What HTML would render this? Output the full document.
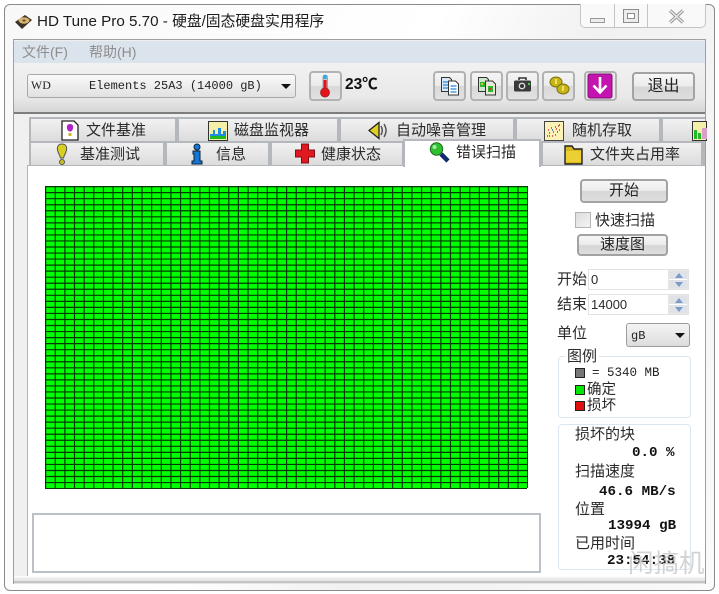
<!DOCTYPE html>
<html lang="zh"><head><meta charset="utf-8">
<style>
html,body{margin:0;padding:0;width:719px;height:594px;overflow:hidden;background:#fff}
body{position:relative;font-family:"Liberation Sans","Noto Sans CJK SC",sans-serif;color:#222}
.a{position:absolute;box-sizing:border-box}
.t{position:absolute;white-space:nowrap;font-size:15px;line-height:18px;color:#2a2a2a}
.m{position:absolute;white-space:nowrap;font-family:"Liberation Mono","Noto Sans CJK SC",monospace;font-size:13px;line-height:14px;color:#222}
.b{font-weight:bold;color:#111}
.btn{position:absolute;box-sizing:border-box;border:2px solid #a3a3a3;border-radius:4px;background:linear-gradient(#f6f6f6 0%,#ececec 48%,#d6d6d6 52%,#dedede 100%);text-align:center;font-size:15px;color:#222}
.tool{position:absolute;box-sizing:border-box;width:33px;height:30px;top:71px;border:2px solid #b2b2b2;border-radius:4px;background:linear-gradient(#f4f4f4 0%,#ebebeb 48%,#d8d8d8 52%,#e2e2e2 100%)}
.tab{position:absolute;box-sizing:border-box;height:24px;border:2px solid #b4b8bc;border-bottom:0;background:linear-gradient(#f1f1f1,#dcdcdc);font-size:15px;line-height:23px;color:#2a2a2a;white-space:nowrap}
.tab span{position:absolute;top:0}
.tab svg{position:absolute}
.spin{position:absolute;left:666px;width:23px;box-sizing:border-box;background:#dfe3e8;border:1px solid #e6e6e6}
</style></head><body>
<!-- window frame -->
<div class="a" style="left:4px;top:4px;width:711px;height:587px;border:1px solid #8a8a8a;border-radius:6px;background:linear-gradient(115deg,#f8f8f8 0%,#fff 45%,#f1f1f1 62%,#fafafa 100%)"></div>
<!-- hd icon -->
<svg class="a" style="left:14px;top:13px" width="19" height="18" viewBox="0 0 19 18"><path d="M1 9 L11 2 L18 7 L8 16 Z" fill="#3b3225"/><ellipse cx="10" cy="7.500" rx="5.500" ry="3.200" fill="#d7b471"/><ellipse cx="10" cy="7.500" rx="1.600" ry="1" fill="#5b4a2c"/></svg>
<div class="t" style="left:37px;top:13px;font-size:15.200px;color:#1c1c1c">HD Tune Pro 5.70 - <span style="font-size:14.800px">硬盘/固态硬盘实用程序</span></div>
<!-- caption buttons -->
<div class="a" style="left:580px;top:4px;width:126px;height:24px;border:1px solid #c4c4c4;border-top:0;border-radius:0 0 5px 5px;background:#f9f9f9"></div>
<div class="a" style="left:614px;top:4px;width:1px;height:23px;background:#c4c4c4"></div>
<div class="a" style="left:647px;top:4px;width:1px;height:23px;background:#c4c4c4"></div>
<div class="a" style="left:590px;top:18px;width:15px;height:5px;border:1px solid #9a9a9a;background:#ececec"></div>
<div class="a" style="left:623px;top:9px;width:16px;height:14px;border:1px solid #8c8c8c;background:#ececec"><div class="a" style="left:3px;top:3px;width:8px;height:6px;border:1px solid #8c8c8c;background:#fff"></div></div>
<svg class="a" style="left:668px;top:9px" width="17" height="15" viewBox="0 0 17 15"><path d="M2 1.500 L15 13.500 M15 1.500 L2 13.500" stroke="#9a9a9a" stroke-width="3.400" fill="none"/><path d="M2 1.500 L15 13.500 M15 1.500 L2 13.500" stroke="#eee" stroke-width="1.200" fill="none"/></svg>
<!-- client -->
<div class="a" style="left:13px;top:39px;width:693px;height:545px;border:1px solid #9ca0a4;background:#efefef"></div>
<div class="a" style="left:14px;top:41px;width:691px;height:22px;background:#dbe3ec"></div>
<div class="t" style="left:22px;top:43px;font-size:14px;color:#8d8d8d">文件(F)</div>
<div class="t" style="left:89px;top:43px;font-size:14px;color:#8d8d8d">帮助(H)</div>
<div class="a" style="left:14px;top:63px;width:691px;height:49px;background:linear-gradient(#f1f1f1,#e9e9e9 70%,#d6d6d6)"></div>
<div class="a" style="left:14px;top:112px;width:691px;height:2px;background:#7d7d7d"></div>
<!-- drive select -->
<div class="a" style="left:27px;top:74px;width:269px;height:24px;border:1px solid #a8a8a8;border-radius:3px;background:linear-gradient(#fafafa,#ededed 50%,#e2e2e2)"></div>
<div class="m" style="left:31px;top:79px;font-size:11.700px;font-family:'Liberation Serif',serif;letter-spacing:.3px">WD</div>
<div class="m" style="left:89px;top:79px;font-size:12px">Elements 25A3 (14000 gB)</div>
<div class="a" style="left:281px;top:84px;border:4px solid transparent;border-top:5px solid #111;border-left-width:5px;border-right-width:5px"></div>
<!-- temp -->
<div class="tool" style="left:309px;top:71px;"></div>
<svg class="a" style="left:317px;top:73px" width="16" height="26" viewBox="0 0 16 26"><rect x="6" y="2" width="4.400" height="15" rx="2" fill="#c8c8c8" stroke="#777" stroke-width=".6"/><rect x="6.600" y="2" width="3" height="4" fill="#28a9e8"/><rect x="6.600" y="7" width="3" height="11" fill="#e2141e"/><circle cx="8" cy="19.500" r="4.600" fill="#e2141e" stroke="#8a2020" stroke-width=".6"/></svg>
<div class="m b" style="left:345px;top:78px;font-size:15.500px;font-family:'Liberation Sans','Noto Sans CJK SC',sans-serif">23℃</div>
<!-- tool buttons -->
<div class="tool" style="left:433px"></div><div class="tool" style="left:470px"></div><div class="tool" style="left:506px"></div><div class="tool" style="left:542px"></div><div class="tool" style="left:584px;top:71px;background:#e8e8e8"></div>
<svg class="a" style="left:440px;top:76px" width="20" height="20" viewBox="0 0 20 20"><path d="M1.500 1.500h8l2 2v12h-10z" fill="#dbe8f5" stroke="#333"/><path d="M8.500 5h7l3 3v11h-10z" fill="#fff" stroke="#333"/><path d="M3 6h5M3 9h5M3 12h5M10.500 10h6M10.500 13h6M10.500 16h6" stroke="#2a86d8" stroke-width="1.300"/></svg>
<svg class="a" style="left:477px;top:76px" width="20" height="20" viewBox="0 0 20 20"><path d="M1.500 1.500h8l2 2v12h-10z" fill="#cde6d0" stroke="#333"/><path d="M8.500 5h7l3 3v11h-10z" fill="#e9e9d8" stroke="#333"/><rect x="3" y="6" width="5" height="5" fill="#2fb82f"/><rect x="11" y="10" width="5" height="6" fill="#2fb82f"/><rect x="4" y="7" width="2" height="2" fill="#e6c020"/><rect x="12" y="12" width="2" height="2" fill="#d03030"/></svg>
<svg class="a" style="left:513px;top:77px" width="19" height="17" viewBox="0 0 19 17"><path d="M6 3V1h7v2" fill="none" stroke="#333" stroke-width="1.600"/><rect x="1" y="3.500" width="17" height="11" rx="1.500" fill="#3a3a3a"/><circle cx="9" cy="9" r="3.400" fill="#ddd"/><circle cx="9" cy="9" r="2" fill="#333"/><rect x="15" y="6" width="2" height="2" fill="#3dd13d"/></svg>
<svg class="a" style="left:548px;top:75px" width="22" height="21" viewBox="0 0 22 21"><ellipse cx="8" cy="7" rx="6" ry="5" fill="#c8b414" stroke="#7c7210"/><ellipse cx="15" cy="14" rx="6" ry="5" fill="#c8b414" stroke="#7c7210"/><rect x="7" y="4" width="2" height="5" fill="#eee36a"/><rect x="14" y="11" width="2" height="5" fill="#eee36a"/></svg>
<svg class="a" style="left:587px;top:73px" width="26" height="26" viewBox="0 0 26 26"><rect x="1" y="1" width="24" height="24" rx="2" fill="#c414b0" stroke="#7d0f74"/><path d="M13 4v15M6.500 12.500l6.500 7 6.500-7" fill="none" stroke="#fff" stroke-width="2.600"/></svg>
<div class="btn" style="left:632px;top:72px;width:63px;height:29px;line-height:25px;font-size:16px">退出</div>
<!-- left strip and panel -->
<div class="a" style="left:14px;top:114px;width:691px;height:469px;background:#f0f0f0"></div>
<div class="a" style="left:27px;top:165px;width:678px;height:418px;background:#fff;border-left:1px solid #b0b4b8;border-top:1px solid #b4b8bc"></div>
<div class="a" style="left:14px;top:576px;width:691px;height:8px;background:linear-gradient(#fff,#e8e8e8 40%,#e4e4e4)"></div>
<div class="a" style="left:14px;top:581px;width:691px;height:2px;background:#c4c4c4"></div>
<!-- tabs row1 -->
<div class="tab" style="left:29px;top:117px;width:148px"><span style="left:55px">文件基准</span>
<svg style="left:29px;top:1px" width="20" height="21" viewBox="0 0 20 21"><path d="M2 1h12l4 4v15H2z" fill="#fff" stroke="#222" stroke-width="1.300"/><path d="M10 4c3 0 3.400 2.500 3 4.500-.5 2-1.500 3-3 3s-2.500-1-3-3c-.4-2 0-4.500 3-4.500z" fill="#b022c8"/><rect x="8.500" y="13" width="3" height="3" fill="#c8bb20"/></svg></div>
<div class="tab" style="left:177px;top:117px;width:162px"><span style="left:55px">磁盘监视器</span>
<svg style="left:29px;top:2px" width="20" height="20" viewBox="0 0 20 20"><rect x=".5" y=".5" width="19" height="19" fill="#f5f0a8" stroke="#333"/><path d="M2 18v-5h3v-4h2v4h3V7h3v6h2v-3h3v8z" fill="#1f8ce0"/><path d="M2 18v-3h16v3z" fill="#22b822"/></svg></div>
<div class="tab" style="left:339px;top:117px;width:176px"><span style="left:55px">自动噪音管理</span>
<svg style="left:27px;top:2px" width="22" height="19" viewBox="0 0 22 19"><path d="M1 9.500 11 1.500v16z" fill="#e0d020" stroke="#222" stroke-width="1.300"/><path d="M13 5q2.500 4.500 0 9M16 3q4 6.500 0 13" stroke="#555" fill="none" stroke-width="1.500"/></svg></div>
<div class="tab" style="left:515px;top:117px;width:146px"><span style="left:55px">随机存取</span>
<svg style="left:27px;top:2px" width="20" height="20" viewBox="0 0 20 20"><rect x=".5" y=".5" width="19" height="19" fill="#fbf2b8" stroke="#444"/><path d="M3 15h1M5 12h1M4 9h1M8 15h1M9 11h1M12 8h1M14 5h1M15 9h1M11 14h1M7 7h1" stroke="#d83030" stroke-width="1.500"/><path d="M5 15h1M8 9h1M13 11h1M15 4h1M11 6h1" stroke="#3060d0" stroke-width="1.500"/></svg></div>
<div class="tab" style="left:661px;top:117px;width:44px;border-right:0">
<svg style="left:29px;top:2px" width="15" height="20" viewBox="0 0 15 20"><rect x=".5" y=".5" width="14" height="19" fill="#f5f0a8" stroke="#333"/><path d="M2 18V9h3v9zM6 18v-6h3v6z" fill="#22b822"/><rect x="10" y="7" width="5" height="11" fill="#d8a0c8"/></svg></div>
<!-- tabs row2 -->
<div class="tab" style="left:29px;top:141px;width:136px"><span style="left:49px">基准测试</span>
<svg style="left:22px;top:0" width="18" height="23" viewBox="0 0 18 23"><path d="M9 1c4 0 5 3 4.500 6-.4 3-2.500 5-3 8h-3c-.5-3-2.600-5-3-8C4 4 5 1 9 1z" fill="#d8d020" stroke="#555"/><circle cx="9" cy="19" r="2.500" fill="#c8c020" stroke="#555"/></svg></div>
<div class="tab" style="left:165px;top:141px;width:105px"><span style="left:49px">信息</span>
<svg style="left:23px;top:0" width="14" height="22" viewBox="0 0 14 22"><circle cx="7" cy="4" r="3" fill="#1478d8" stroke="#123"/><path d="M3 8h7v10h2v3H2v-3h2v-7H3z" fill="#1478d8" stroke="#123"/></svg></div>
<div class="tab" style="left:270px;top:141px;width:134px"><span style="left:49px">健康状态</span>
<svg style="left:22px;top:0" width="22" height="21" viewBox="0 0 22 21"><path d="M7.500 1h7v6h6v7h-6v6h-7v-6h-6V7h6z" fill="#e01820" stroke="#801010"/></svg></div>
<div class="tab" style="left:541px;top:141px;width:162px"><span style="left:47px">文件夹占用率</span>
<svg style="left:20px;top:1px" width="21" height="21" viewBox="0 0 21 21"><path d="M2 5V2h7l2 3h8v15H2z" fill="#d8b820" stroke="#222" stroke-width="1.400"/><path d="M3 7h15v11H3z" fill="#eccf34"/></svg></div>
<div class="tab" style="left:703px;top:141px;width:2px;border-right:0"></div>
<div class="tab" style="left:403px;top:139px;width:138px;height:28px;background:#fff;z-index:2"><span style="left:51px;top:0">错误扫描</span>
<svg style="left:23px;top:0" width="22" height="22" viewBox="0 0 22 22"><path d="M13 13 20 20" stroke="#102a70" stroke-width="4.500"/><circle cx="8.500" cy="8" r="6.200" fill="#2fc02f" stroke="#1e6a1e"/><circle cx="6.500" cy="6" r="2" fill="#a8eca8"/></svg></div>
<!-- grid -->
<svg class="a" style="left:45px;top:186px" width="483" height="303" viewBox="0 0 483 303"><rect width="482" height="302" fill="#00ff00"/><line x1="0" y1="151" x2="483" y2="151" stroke="#063806" stroke-width="302" stroke-dasharray="1.200 8.440"/><line x1="241" y1="0" x2="241" y2="303" stroke="#063806" stroke-width="482" stroke-dasharray="1.200 4.840"/></svg>
<!-- text area -->
<div class="a" style="left:32px;top:513px;width:509px;height:60px;border:2px solid #bcc1c7;background:#fff"></div>
<!-- right controls -->
<div class="btn" style="left:580px;top:179px;width:88px;height:24px;line-height:20px">开始</div>
<div class="a" style="left:575px;top:212px;width:16px;height:16px;border:1px solid #b4b4b4;background:linear-gradient(135deg,#dcdcdc,#f4f4f4)"></div>
<div class="t" style="left:595px;top:212px">快速扫描</div>
<div class="btn" style="left:577px;top:234px;width:91px;height:22px;line-height:18px">速度图</div>
<div class="t" style="left:557px;top:271px">开始</div>
<div class="a" style="left:588px;top:269px;width:101px;height:21px;border:1px solid #e2e2e2;background:#fff"></div>
<div class="t" style="left:591px;top:271px;font-size:13px">0</div>
<div class="t" style="left:557px;top:296px">结束</div>
<div class="a" style="left:588px;top:294px;width:101px;height:21px;border:1px solid #e2e2e2;background:#fff"></div>
<div class="t" style="left:591px;top:296px;font-size:13px">14000</div>
<div class="spin" style="top:270px;height:19px;left:668px;width:20px"><div class="a" style="left:6px;top:2px;border:4px solid transparent;border-top:0;border-bottom:5px solid #7a9cc8"></div><div class="a" style="left:0;top:8px;width:18px;height:1px;background:#fff"></div><div class="a" style="left:6px;top:11px;border:4px solid transparent;border-bottom:0;border-top:5px solid #7a9cc8"></div></div>
<div class="spin" style="top:295px;height:19px;left:668px;width:20px"><div class="a" style="left:6px;top:2px;border:4px solid transparent;border-top:0;border-bottom:5px solid #7a9cc8"></div><div class="a" style="left:0;top:8px;width:18px;height:1px;background:#fff"></div><div class="a" style="left:6px;top:11px;border:4px solid transparent;border-bottom:0;border-top:5px solid #7a9cc8"></div></div>
<div class="t" style="left:557px;top:325px">单位</div>
<div class="a" style="left:626px;top:323px;width:64px;height:24px;border:1px solid #9c9c9c;border-radius:3px;background:linear-gradient(#f4f4f4,#e8e8e8 50%,#dcdcdc)"></div>
<div class="m" style="left:631px;top:329px;font-size:12px">gB</div>
<div class="a" style="left:675px;top:333px;border:5px solid transparent;border-top:5px solid #111;border-bottom:0"></div>
<!-- legend -->
<div class="a" style="left:558px;top:356px;width:133px;height:62px;border:1px solid #dce6f0;border-radius:4px"></div>
<div class="t" style="left:565px;top:348px;background:#fff;padding:0 2px">图例</div>
<div class="a" style="left:575px;top:368px;width:10px;height:10px;background:#777;border:1px solid #222"></div>
<div class="m" style="left:592px;top:366px;font-size:12.500px">= 5340 MB</div>
<div class="a" style="left:575px;top:385px;width:10px;height:10px;background:#00e800;border:1px solid #222"></div>
<div class="t" style="left:587px;top:381px;font-size:14.500px">确定</div>
<div class="a" style="left:575px;top:401px;width:10px;height:10px;background:#e01010;border:1px solid #222"></div>
<div class="t" style="left:587px;top:397px;font-size:14.500px">损坏</div>
<!-- info box -->
<div class="a" style="left:558px;top:424px;width:133px;height:146px;border:1px solid #dce6f0;border-radius:4px"></div>
<div class="t" style="left:575px;top:426px">损坏的块</div>
<div class="m b" style="left:632px;top:446px;font-size:14.200px">0.0 %</div>
<div class="t" style="left:575px;top:463px">扫描速度</div>
<div class="m b" style="left:599px;top:485px;font-size:14.200px">46.6 MB/s</div>
<div class="t" style="left:575px;top:501px">位置</div>
<div class="m b" style="left:608px;top:519px;font-size:14.200px">13994 gB</div>
<div class="t" style="left:575px;top:535px">已用时间</div>
<div class="m b" style="left:607px;top:554px;font-size:14.200px">23:54:38</div>
<div class="t" style="left:628px;top:550px;font-size:25.500px;line-height:28px;color:rgba(200,200,200,.8)">闲搞机</div>
</body></html>
